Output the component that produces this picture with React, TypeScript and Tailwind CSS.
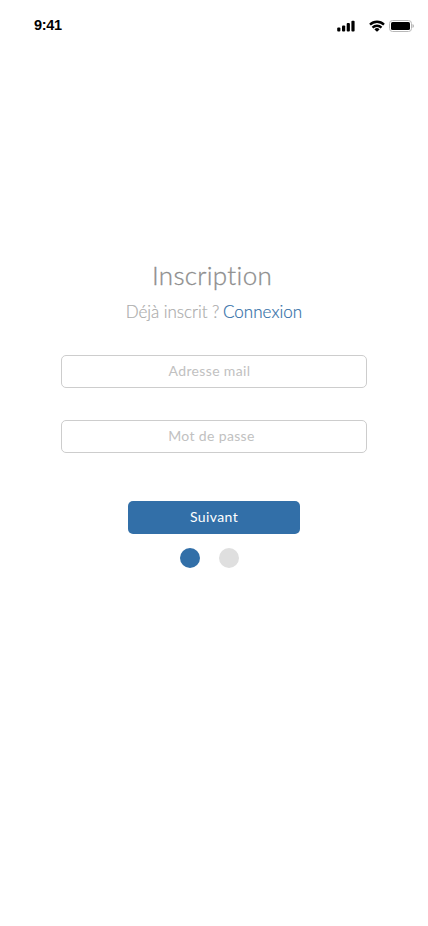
import { useState } from "react";

function StatusBar() {
  return (
    <header className="flex h-[52px] items-center justify-between pr-[14px] pl-[34px] text-black">
      <span className="-mt-0.5 font-['Liberation_Sans',Arial,sans-serif] text-[14.5px] font-bold leading-4 tracking-[-0.3px]">9:41</span>
      <div className="flex items-center">
        <svg width="18" height="12" viewBox="0 0 18 12" fill="currentColor">
          <rect x="0.2" y="7.5" width="3.2" height="4" rx="1" />
          <rect x="5" y="5.5" width="3.2" height="6" rx="1" />
          <rect x="9.7" y="3.1" width="3.2" height="8.4" rx="1" />
          <rect x="14.4" y="0.7" width="3.2" height="10.8" rx="1" />
        </svg>
        <svg className="ml-[14px]" width="16" height="12" viewBox="0 0 16 12" fill="none" stroke="currentColor" strokeWidth="2.3">
          <path d="M1 4.6a10 10 0 0 1 14 0" />
          <path d="M3.5 7.6a6.4 6.4 0 0 1 9 0" />
          <path d="M8 11.8 5.4 9.4a3.7 3.7 0 0 1 5.2 0Z" fill="currentColor" stroke="none" />
        </svg>
        <svg className="ml-1" width="25" height="12" viewBox="0 0 25 12">
          <rect x="0.5" y="0.5" width="22" height="11" rx="3" fill="none" stroke="#b8b8b8" />
          <rect x="2" y="2" width="19" height="8" rx="1.6" fill="currentColor" />
          <path d="M23.5 4v4a2.1 2.1 0 0 0 0-4Z" fill="#b0b0b0" />
        </svg>
      </div>
    </header>
  );
}

const field =
  "h-[33px] w-[306px] rounded-[5px] border border-[#cdcdcd] bg-white pb-[2px] text-center text-[14px] tracking-[0.35px] text-[#777] outline-none placeholder:text-[#c1c1c1] placeholder:opacity-100";

export default function App() {
  const [mail, setMail] = useState("");
  const [password, setPassword] = useState("");
  return (
    <div className="flex h-[926px] w-[428px] flex-col bg-white font-['Lato',sans-serif] antialiased">
      <StatusBar />
      <main className="flex flex-col items-center pt-[207px]">
        <h1 className="mr-1 h-8 text-[26px] font-light leading-8 tracking-[0.3px] text-[#8e8e8e] [-webkit-text-stroke:0.3px_#8e8e8e]">Inscription</h1>
        <p className="mt-[9px] h-6 whitespace-nowrap text-[17px] font-light leading-6 tracking-[-0.05px] text-[#acacac] [-webkit-text-stroke:0.2px]">
          Déjà inscrit ? <a className="-ml-px tracking-[0.05px] text-[#326fa8]">Connexion</a>
        </p>
        <form className="mt-[31px] flex flex-col items-center">
          <input className={`${field} pr-[9px]`} placeholder="Adresse mail" value={mail} onChange={(e) => setMail(e.target.value)} />
          <input className={`${field} mt-8 pr-[5px]`} placeholder="Mot de passe" value={password} onChange={(e) => setPassword(e.target.value)} />
          <button type="button" className="mt-12 h-[33px] w-[172px] rounded-[5px] bg-[#326fa8] pb-[2px] text-[14px] tracking-[0.4px] text-white">
            Suivant
          </button>
        </form>
        <div className="mt-[14px] mr-[9px] flex gap-[19px]">
          <span className="size-5 rounded-full bg-[#326fa8]" />
          <span className="size-5 rounded-full bg-[#dfdfdf]" />
        </div>
      </main>
    </div>
  );
}
